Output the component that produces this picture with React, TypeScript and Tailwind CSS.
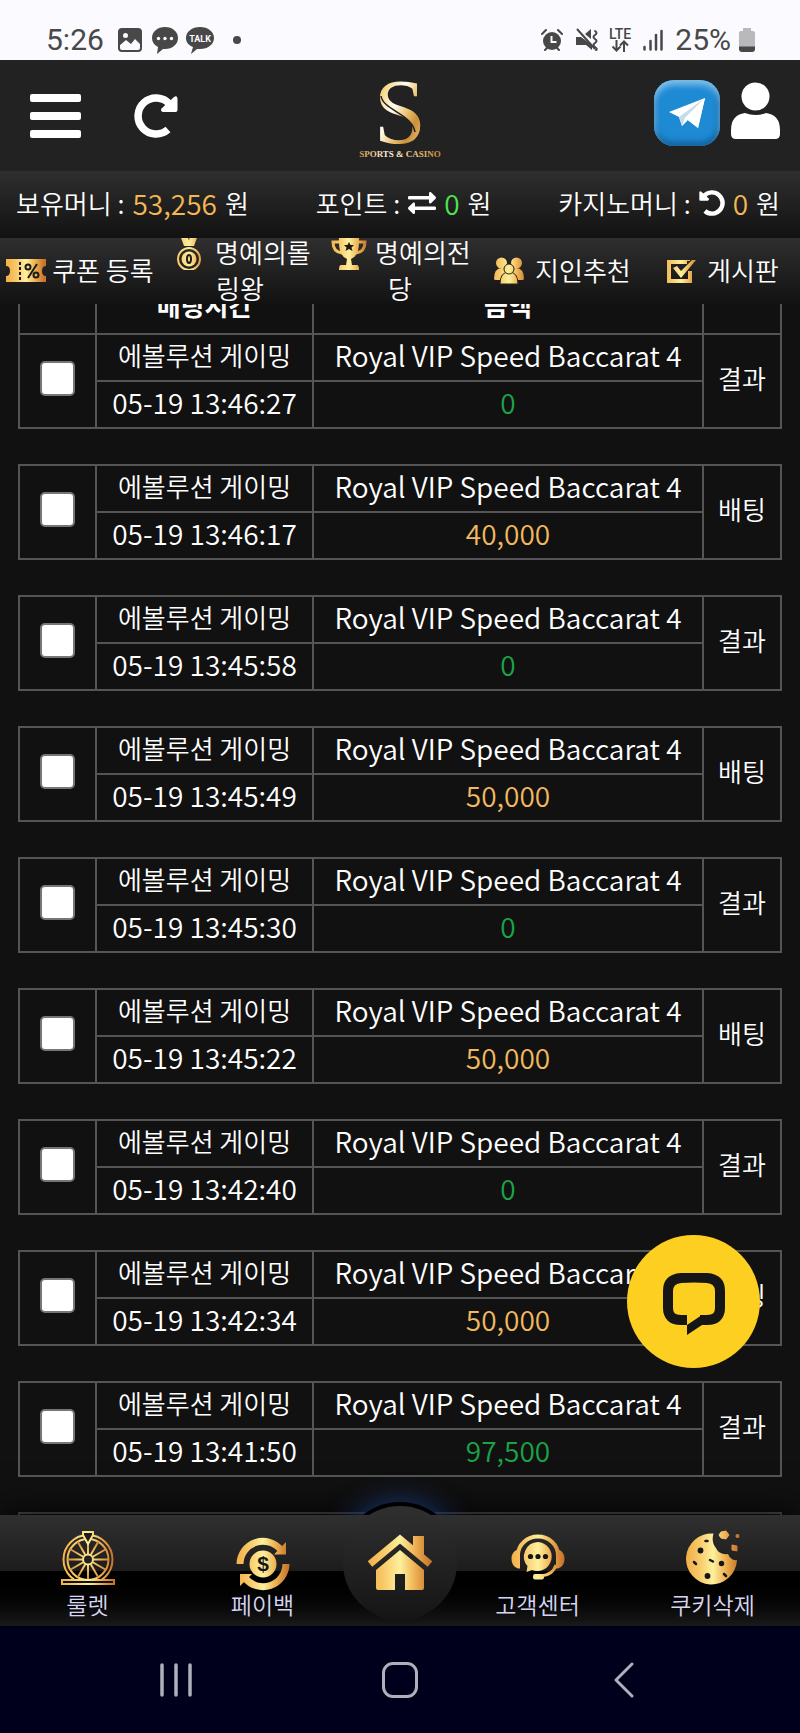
import type { ReactNode } from 'react';
import { FaExchangeAlt } from 'react-icons/fa';

type Bet = { time: string; amount: string; kind: '결과' | '배팅' };

const bets: Bet[] = [
  { time: '05-19 13:46:27', amount: '0', kind: '결과' },
  { time: '05-19 13:46:17', amount: '40,000', kind: '배팅' },
  { time: '05-19 13:45:58', amount: '0', kind: '결과' },
  { time: '05-19 13:45:49', amount: '50,000', kind: '배팅' },
  { time: '05-19 13:45:30', amount: '0', kind: '결과' },
  { time: '05-19 13:45:22', amount: '50,000', kind: '배팅' },
  { time: '05-19 13:42:40', amount: '0', kind: '결과' },
  { time: '05-19 13:42:34', amount: '50,000', kind: '배팅' },
  { time: '05-19 13:41:50', amount: '97,500', kind: '결과' },
];

/* Svg wrapper that carries the shared gold gradient */
function GoldIcon({ id, w, h, className, children }: { id: string; w: number; h: number; className?: string; children: (fill: string) => ReactNode }) {
  return (
    <svg width={w} height={h} viewBox={`0 0 ${w} ${h}`} className={className} aria-hidden="true">
      <defs>
        <linearGradient id={id} gradientUnits="userSpaceOnUse" x1="0" y1="0" x2={w} y2="0">
          <stop offset="0.05" stopColor="#f3b24b" />
          <stop offset="0.25" stopColor="#f8c868" />
          <stop offset="0.5" stopColor="#fdf09c" />
          <stop offset="0.72" stopColor="#eeb253" />
          <stop offset="0.95" stopColor="#c6752a" />
        </linearGradient>
      </defs>
      {children(`url(#${id})`)}
    </svg>
  );
}

function RotateIcon({ className }: { className?: string }) {
  return (
    <svg viewBox="0 0 44 44" className={className} aria-hidden="true">
      <path d="M34 35.500A18 18 0 1 1 35.500 10" fill="none" stroke="currentColor" strokeWidth="7.500" />
      <path d="M40 3q3-2 3.500 1.500V16q0 2-2 2H29q-3-1-1.500-3.500z" fill="currentColor" />
    </svg>
  );
}

function StatusBar() {
  return (
    <div className="flex h-[60px] shrink-0 items-center justify-between bg-[#fafaff] pt-5 pr-[45px] pl-[46px] font-[Roboto,sans-serif] text-[30px] leading-[36px] font-normal text-[#484848]">
      <div className="flex items-center">
        <span>5:26</span>
        <svg width="24" height="24" viewBox="0 0 24 24" className="ml-3.5" aria-hidden="true">
          <rect x="1" y="1" width="22" height="22" rx="3" fill="none" stroke="#484848" strokeWidth="2" />
          <path d="M1 4q0-3 3-3h16q3 0 3 3v13l-6-6-4 5-5-4-7 6z" fill="#484848" />
          <circle cx="7.500" cy="7.500" r="2.500" fill="#fafaff" />
        </svg>
        <svg width="26" height="28" viewBox="0 0 26 28" className="ml-2.5" aria-hidden="true">
          <path d="M13 1c7.500 0 13 4.700 13 11s-5.500 11-13 11h-2l-6 5 1-7C2 19 0 16 0 12 0 5.700 5.500 1 13 1z" fill="#484848" />
          <circle cx="6.500" cy="12.500" r="1.700" fill="#fafaff" />
          <circle cx="13" cy="12.500" r="1.700" fill="#fafaff" />
          <circle cx="19.500" cy="12.500" r="1.700" fill="#fafaff" />
        </svg>
        <svg width="28" height="28" viewBox="0 0 28 28" className="ml-2" aria-hidden="true">
          <path d="M14 1c8 0 14 4.700 14 11s-6 11-14 11h-3l-6 5 2-7C2 19 0 16 0 12 0 5.700 6 1 14 1z" fill="#484848" />
          <text x="14" y="15.500" textAnchor="middle" fontFamily="Roboto, sans-serif" fontSize="9" fontWeight="700" fill="#fafaff">TALK</text>
        </svg>
        <span className="ml-[19px] h-2 w-2 rounded-full bg-[#484848]"></span>
      </div>
      <div className="flex items-center">
        <svg width="22" height="22" viewBox="0 0 22 22" aria-hidden="true">
          <circle cx="11" cy="12" r="9" fill="#484848" />
          <path d="M1 5l4-4M21 5l-4-4M4 21l3-3M18 21l-3-3" stroke="#484848" strokeWidth="2" strokeLinecap="round" />
          <path d="M10.500 7v6h5" fill="none" stroke="#fafaff" strokeWidth="2" />
        </svg>
        <svg width="24" height="24" viewBox="0 0 24 24" className="ml-3" aria-hidden="true">
          <path d="M1 9h5l11 8v5l-6-5H1zM10 6l6-5v10z" fill="#484848" />
          <path d="M2 1l18 20" stroke="#484848" strokeWidth="2" />
          <path d="M20 3q3 2 0 4t0 4 0 4 0 4 1 3" fill="none" stroke="#484848" strokeWidth="2" strokeLinecap="round" />
        </svg>
        <span className="ml-2.5 flex flex-col items-center text-[14px] leading-[12px] font-medium">
          LTE
          <svg width="18" height="12" viewBox="0 0 18 12" aria-hidden="true">
            <path d="M5.500 0v10M1.500 6.500l4 4 4-4M13 12V2M9 5.500l4-4 4 4" fill="none" stroke="#484848" strokeWidth="2" />
          </svg>
        </span>
        <svg width="20" height="22" viewBox="0 0 20 22" className="ml-3" aria-hidden="true">
          <path d="M1.500 18v2.500M7.500 12v8.500M13 6v14.500M18.500 2v18.500" stroke="#484848" strokeWidth="2.500" strokeLinecap="round" />
        </svg>
        <span className="ml-3">25%</span>
        <svg width="16" height="24" viewBox="0 0 16 24" className="ml-2" aria-hidden="true">
          <path d="M4 0h8v3h2q2 0 2 2v14H0V5q0-2 2-2h2z" fill="#b9b9bb" />
          <path d="M0 18.500h16V21q0 3-3 3H3q-3 0-3-3z" fill="#484848" />
        </svg>
      </div>
    </div>
  );
}

function Logo() {
  return (
    <svg width="84" height="80" viewBox="0 0 84 80" role="img" aria-label="Sports & Casino">
      <defs>
        <linearGradient id="logo-s" x1="0" y1="0" x2="1" y2="1">
          <stop offset="0.1" stopColor="#c28a35" />
          <stop offset="0.25" stopColor="#f6d98b" />
          <stop offset="0.42" stopColor="#fffdf2" />
          <stop offset="0.58" stopColor="#ecc06b" />
          <stop offset="0.7" stopColor="#c98f3c" />
          <stop offset="0.9" stopColor="#f4d080" />
        </linearGradient>
        <linearGradient id="logo-text" x1="0" y1="0" x2="1" y2="0">
          <stop offset="0" stopColor="#c99542" />
          <stop offset="0.35" stopColor="#fffbe8" />
          <stop offset="0.55" stopColor="#f4dfa4" />
          <stop offset="1" stopColor="#c58d3b" />
        </linearGradient>
      </defs>
      <text x="42" y="65" textAnchor="middle" fontFamily="Liberation Serif, serif" fontSize="94" fill="url(#logo-s)">S</text>
      <path d="M23 18c2 14 31 18 34 36" fill="none" stroke="#222" strokeWidth="1.500" />
      <text x="42" y="79" textAnchor="middle" fontFamily="Liberation Serif, serif" fontSize="9" fontWeight="700" fill="url(#logo-text)">SPORTS &amp; CASINO</text>
    </svg>
  );
}

function Header() {
  return (
    <header className="grid h-[111px] shrink-0 grid-cols-3 items-center bg-[#222] px-5 pl-[30px] text-white">
      <div className="flex items-center gap-[53px]">
        <button type="button" aria-label="메뉴" className="flex w-[51px] flex-col gap-2.5">
          <span className="h-2 w-full rounded-[2px] bg-white"></span>
          <span className="h-2 w-full rounded-[2px] bg-white"></span>
          <span className="h-2 w-full rounded-[2px] bg-white"></span>
        </button>
        <button type="button" aria-label="새로고침">
          <RotateIcon className="h-11 w-11" />
        </button>
      </div>
      <a href="#" className="-ml-2.5 justify-self-center pt-1">
        <Logo />
      </a>
      <div className="flex items-center justify-end gap-[11px] pb-1.5">
        <a href="#" aria-label="텔레그램" className="flex h-[66px] w-[66px] items-center justify-center rounded-[20px] bg-[#1e8ad4] shadow-[inset_0_5px_6px_#7fbfe9,inset_0_-4px_6px_#135f96,inset_3px_0_4px_#3c9bdb,inset_-3px_0_4px_#1a74b4]">
          <svg width="38" height="32" viewBox="0 0 38 32" aria-hidden="true">
            <path d="M1 15L37 1l-7 30-10-8-6 6-3-9z" fill="#fff" />
            <path d="M11 20L37 1 17 21l-3 8z" fill="#c5dcec" />
            <path d="M17 21L37 1l-7 30z" fill="#fff" />
          </svg>
        </a>
        <button type="button" aria-label="내 정보" className="pb-1">
          <svg width="49" height="57" viewBox="0 0 49 57" fill="#fff" aria-hidden="true">
            <circle cx="24.500" cy="14.500" r="14" />
            <path d="M14 31q10.500 4 21 0 14 2 14 17v4q0 5-5 5H5q-5 0-5-5v-4q0-15 14-17z" />
          </svg>
        </button>
      </div>
    </header>
  );
}

function MoneyBar() {
  return (
    <div className="flex h-[67px] shrink-0 items-center justify-between bg-linear-to-b from-[#2f2f2f] to-[#121212] pr-5 pb-1 pl-4">
      <span className="flex items-center gap-2">
        보유머니 : <span className="text-[28px] text-[#f5b752]">53,256</span> 원
      </span>
      <span className="flex items-center gap-2">
        포인트 :
        <button type="button" aria-label="포인트 전환">
          <FaExchangeAlt size={28} />
        </button>
        <span className="text-[28px] text-[#4ee44e]">0</span>
        원
      </span>
      <span className="flex items-center gap-2">
        카지노머니 :
        <button type="button" aria-label="카지노머니 회수">
          <RotateIcon className="h-[26px] w-[26px] -scale-x-100" />
        </button>
        <span className="text-[28px] text-[#f5b752]">0</span>
        원
      </span>
    </div>
  );
}

const ink = '#1d1a14';

const menu: { label: string; icon: ReactNode }[] = [
  {
    label: '쿠폰 등록',
    icon: (
      <GoldIcon id="g-coupon" w={40} h={36} className="inline align-top">
        {(gold) => (
          <>
            <path d="M0 7h40v7q-4 0-4 5t4 5v6H0v-6q4 0 4-5t-4-5z" fill={gold} />
            <path d="M14 10v3M14 15v3M14 20v3M14 25v3" stroke={ink} strokeWidth="2" />
            <circle cx="22" cy="15" r="2.500" fill="none" stroke={ink} strokeWidth="2" />
            <circle cx="30" cy="23" r="2.500" fill="none" stroke={ink} strokeWidth="2" />
            <path d="M31 12l-9 14" stroke={ink} strokeWidth="2" />
          </>
        )}
      </GoldIcon>
    ),
  },
  {
    label: '명예의롤링왕',
    icon: (
      <GoldIcon id="g-medal" w={40} h={36} className="inline align-top">
        {(gold) => (
          <>
            <path d="M11 1h7l4 11h-7zM21 1h8l-4 11h-3l-2-5z" fill={gold} />
            <circle cx="20" cy="25" r="11" fill="none" stroke={gold} strokeWidth="2" />
            <circle cx="20" cy="25" r="7.500" fill={gold} />
            <ellipse cx="20" cy="25" rx="2" ry="4" fill="none" stroke={ink} strokeWidth="2" />
          </>
        )}
      </GoldIcon>
    ),
  },
  {
    label: '명예의전당',
    icon: (
      <GoldIcon id="g-trophy" w={40} h={36} className="inline align-top">
        {(gold) => (
          <>
            <path d="M10 3h20q1 19-8 22l1 6h5q2 0 2 5H10q0-5 2-5h5l1-6Q9 22 10 3z" fill={gold} />
            <path d="M10 8H4q0 10 9 11M30 8h6q0 10-9 11" fill="none" stroke={gold} strokeWidth="3" />
            <path d="M20 8l1.500 3h3.500l-2.500 2.500 1 3.500-3.500-2-3.500 2 1-3.500L15 11h3.500z" fill={ink} />
          </>
        )}
      </GoldIcon>
    ),
  },
  {
    label: '지인추천',
    icon: (
      <GoldIcon id="g-friends" w={40} h={36} className="inline align-top">
        {(gold) => (
          <>
            <g fill={gold}>
              <circle cx="12.500" cy="11" r="5.500" />
              <circle cx="27.500" cy="11" r="5.500" />
              <path d="M5 27q0-11 8-11 4 0 5 3l-4 9H7q-2 0-2-1zM35 27q0-11-8-11-4 0-5 3l4 9h7q2 0 2-1z" />
            </g>
            <g fill={gold} stroke="#2a2216" strokeWidth="1">
              <path d="M11 32q0-12 9-12t9 12z" />
              <circle cx="20" cy="17" r="5" />
            </g>
          </>
        )}
      </GoldIcon>
    ),
  },
  {
    label: '게시판',
    icon: (
      <GoldIcon id="g-board" w={40} h={36} className="inline align-top">
        {(gold) => (
          <>
            <path d="M29 19v10H8V10h21" fill="none" stroke={gold} strokeWidth="4" />
            <path d="M26 9h6v8h-6z" fill="#222" />
            <path d="M12 16l4-2 4 5L31 8h4L20 26z" fill={gold} />
          </>
        )}
      </GoldIcon>
    ),
  },
];

function MenuBar() {
  return (
    <nav className="grid h-[66px] shrink-0 grid-cols-5 content-center items-center overflow-hidden bg-linear-to-b from-[#2f2f2f] to-[#121212] pb-0.5 text-center">
      {menu.map((item) => (
        <a key={item.label} href="#" className="leading-[36px] break-all">
          {item.icon} {item.label}
        </a>
      ))}
    </nav>
  );
}

const cell = 'border-2 border-[#555] px-0 pt-0 pb-1.5';
const headCell = 'border-2 border-[#555] px-0 pt-0 pb-3 leading-[30px] font-bold';

function BetRows({ bet }: { bet: Bet }) {
  const amountColor = bet.kind === '결과' ? 'text-[#1ba345]' : 'text-[#f0b95e]';
  return (
    <>
      <tr className="h-[47px]">
        <td rowSpan={2} className={cell}>
          <input
            type="checkbox"
            aria-label={`${bet.time} 선택`}
            className="mx-auto block h-[35px] w-[35px] appearance-none rounded-[5px] border-2 border-[#767676] bg-white"
          />
        </td>
        <td className={cell}>에볼루션 게이밍</td>
        <td className={`${cell} text-[28px]`}>Royal VIP Speed Baccarat 4</td>
        <td rowSpan={2} className={cell}>{bet.kind}</td>
      </tr>
      <tr className="h-[47px]">
        <td className={`${cell} text-[28px]`}>{bet.time}</td>
        <td className={`${cell} text-[28px] ${amountColor}`}>{bet.amount}</td>
      </tr>
      <tr className="h-[37px]">
        <td colSpan={4} className="p-0"></td>
      </tr>
    </>
  );
}

function BetTable() {
  return (
    <div className="px-[18px]">
      {/* header row is scrolled half way under the menu bar */}
      <table className="-mt-[18px] w-full table-fixed border-collapse text-center leading-[36px]">
        <colgroup>
          <col className="w-[77px]" />
          <col className="w-[217px]" />
          <col />
          <col className="w-[78px]" />
        </colgroup>
        <thead>
          <tr className="h-[47px]">
            <th className={headCell}></th>
            <th className={headCell}>배팅시간</th>
            <th className={headCell}>금액</th>
            <th className={headCell}></th>
          </tr>
        </thead>
        <tbody>
          {bets.map((bet) => (
            <BetRows key={bet.time} bet={bet} />
          ))}
          <tr className="h-[47px]">
            <td colSpan={4} className={cell}></td>
          </tr>
        </tbody>
      </table>
    </div>
  );
}

function NavItem({ label, children }: { label: string; children: ReactNode }) {
  return (
    <a href="#" className="flex flex-1 flex-col items-center pt-3.5 text-[23px] leading-[26px] text-[#d6d6f2]">
      {children}
      {label}
    </a>
  );
}

const spokes = [0, 30, 60, 90, 120, 150, 180, 210, 240, 270, 300, 330];

function BottomNav() {
  return (
    <nav className="relative z-10 h-[111px] shrink-0 shadow-[0_0_36px_#000]">
      <div className="absolute -top-[13px] left-1/2 h-[122px] w-[122px] -translate-x-1/2 rounded-full bg-black shadow-[0_0_28px_#1b3a78]"></div>
      <div className="relative flex h-full bg-linear-to-b from-[#303030] via-[#1d1d1d] via-50% to-[#1d1d1d]">
        <div className="absolute inset-x-0 bottom-0 h-[55px] bg-linear-to-b from-black to-[#191919]"></div>
        <div className="relative flex w-full">
          <NavItem label="룰렛">
            <GoldIcon id="g-roulette" w={56} h={62}>
              {(gold) => (
                <g fill="none" stroke={gold} strokeWidth="2">
                  <circle cx="28" cy="30.500" r="24.500" />
                  <circle cx="28" cy="30.500" r="20.500" />
                  <circle cx="28" cy="30.500" r="5" />
                  {spokes.map((deg) => (
                    <path key={deg} d="M33 30.500h15.500" transform={`rotate(${deg} 28 30.500)`} />
                  ))}
                  <rect x="2" y="51" width="52" height="4" fill="#111" />
                  <path d="M23 3h10v3l-5 9-5-9z" fill="#1d1d1d" />
                </g>
              )}
            </GoldIcon>
          </NavItem>
          <NavItem label="페이백">
            <GoldIcon id="g-payback" w={56} h={62}>
              {(gold) => (
                <>
                  <path d="M5 35A23 23 0 0 1 46 21M51 35A23 23 0 0 1 10 49" fill="none" stroke={gold} strokeWidth="7" />
                  <path d="M51 13v12.500H39zM5 57V45h12z" fill={gold} />
                  <circle cx="28" cy="35" r="13.500" fill={gold} />
                  <text x="28" y="42" textAnchor="middle" fontFamily="Liberation Sans, sans-serif" fontSize="21" fontWeight="700" fill="#161616">$</text>
                </>
              )}
            </GoldIcon>
          </NavItem>
          <a href="#" aria-label="홈" className="-mt-[9px] flex h-[114px] w-[100px] justify-center">
            <span className="flex h-[114px] w-[114px] shrink-0 items-center justify-center rounded-full bg-linear-to-b from-[#303030] to-[#151515]">
              <GoldIcon id="g-home" w={68} h={58}>
                {(gold) => (
                  <>
                    <path d="M10 36L34 16l24 20v18q0 2-2 2H39V40H29v16H12q-2 0-2-2z" fill={gold} />
                    <path d="M4 32L34 7l30 25" fill="none" stroke="#262626" strokeWidth="11" />
                    <path d="M4 30L34 5l30 25" fill="none" stroke={gold} strokeWidth="7" />
                    <path d="M47 2h11v21l-11-9z" fill={gold} />
                  </>
                )}
              </GoldIcon>
            </span>
          </a>
          <NavItem label="고객센터">
            <GoldIcon id="g-support" w={56} h={62}>
              {(gold) => (
                <>
                  <path d="M8 26a20 18.500 0 0 1 40 0" fill="none" stroke={gold} strokeWidth="4" />
                  <path d="M46 36q-3 10-15 11" fill="none" stroke={gold} strokeWidth="3" />
                  <rect x="23" y="45" width="11" height="5.500" rx="2" fill={gold} />
                  <path d="M10 21v18.500H8q-6.500-2-6.500-9.500T8 20.500zM46 21v18.500h2q6.500-2 6.500-9.500T48 20.500z" fill={gold} />
                  <path d="M28 13a14.500 14.500 0 1 1-6 28l-5.500 2 1-6A14.500 14.500 0 0 1 28 13z" fill={gold} />
                  <circle cx="20.500" cy="27.500" r="2.600" fill="#161616" />
                  <circle cx="28" cy="27.500" r="2.600" fill="#161616" />
                  <circle cx="35.500" cy="27.500" r="2.600" fill="#161616" />
                </>
              )}
            </GoldIcon>
          </NavItem>
          <NavItem label="쿠키삭제">
            <GoldIcon id="g-cookie" w={56} h={62}>
              {(gold) => (
                <>
                  <path d="M28.500 4.500A25.500 25.500 0 1 0 52 31q-6 1-9-6-9 1-12-6-5-6-2.500-14.500z" fill={gold} />
                  <path d="M36 3l5-1 3 4-3 4-5-1-2-3zM47 16l5 1v5l-5-1z" fill={gold} stroke={gold} strokeLinejoin="round" />
                  <circle cx="52.500" cy="7" r="2" fill={gold} />
                  <circle cx="15.500" cy="21.500" r="2.900" fill="#161616" />
                  <circle cx="36.500" cy="34.500" r="2.700" fill="#161616" />
                  <circle cx="22.500" cy="47" r="2.900" fill="#161616" />
                  <path d="M20.500 12h2M9 33l2 2M25 31l3 1.500M39 45l2 2" stroke="#161616" strokeWidth="2.500" strokeLinecap="round" />
                </>
              )}
            </GoldIcon>
          </NavItem>
        </div>
      </div>
    </nav>
  );
}

function ChatButton() {
  return (
    <button type="button" aria-label="채팅 상담" className="absolute right-10 bottom-[147px] flex h-[133px] w-[133px] items-center justify-center rounded-full bg-[#fdcf20] pt-1">
      <svg width="62" height="62" viewBox="0 0 62 62" aria-hidden="true">
        <path d="M24 47h-6Q5 47 5 35V18Q5 6 18 5q13-1 26 0 13 1 13 13v17q0 12-13 12h-7" fill="none" stroke="#161616" strokeWidth="10" />
        <path d="M39 42v10L24 62V52z" fill="#161616" />
      </svg>
    </button>
  );
}

function SystemNav() {
  return (
    <div className="relative z-20 grid h-[107px] shrink-0 grid-cols-3 items-center justify-items-center bg-[#00001c] px-16">
      <button type="button" aria-label="최근 앱">
        <svg width="34" height="36" viewBox="0 0 34 36" fill="none" stroke="#b0afbc" strokeWidth="3.500" strokeLinecap="round" aria-hidden="true">
          <path d="M3 3v30M17 3v30M31 3v30" />
        </svg>
      </button>
      <button type="button" aria-label="홈 화면" className="h-9 w-9 rounded-[11px] border-3 border-[#b0afbc]"></button>
      <button type="button" aria-label="뒤로">
        <svg width="20" height="36" viewBox="0 0 20 36" fill="none" stroke="#b0afbc" strokeWidth="3" strokeLinecap="round" strokeLinejoin="round" aria-hidden="true">
          <path d="M18 2L2 18l16 16" />
        </svg>
      </button>
    </div>
  );
}

export default function App() {
  return (
    <div className="flex h-screen flex-col bg-[#111] font-['Noto_Sans_CJK_KR',sans-serif] text-[26px] leading-[36px] font-[350] text-white">
      <StatusBar />
      <Header />
      <MoneyBar />
      <MenuBar />
      <main className="relative min-h-0 flex-1 overflow-hidden">
        <BetTable />
        <ChatButton />
      </main>
      <BottomNav />
      <SystemNav />
    </div>
  );
}
